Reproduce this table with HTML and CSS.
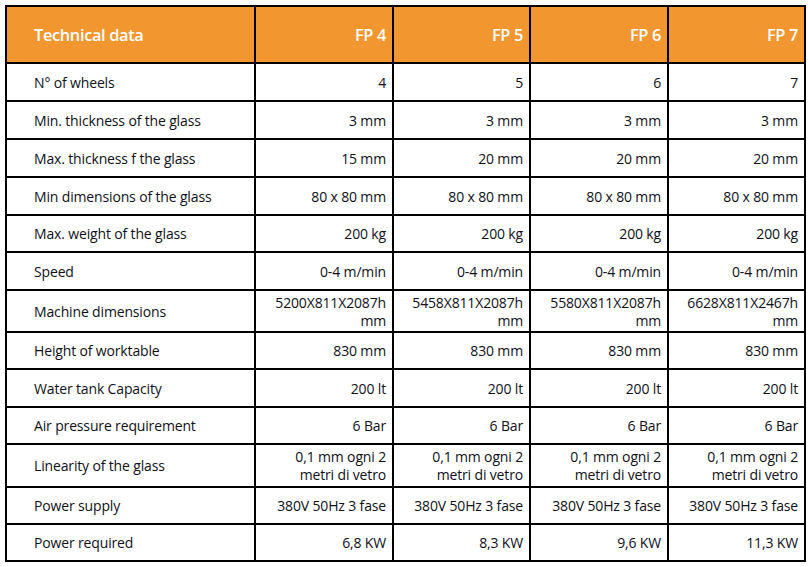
FILE: index.html
```html
<!DOCTYPE html>
<html lang="en">
<head>
<meta charset="utf-8">
<title>Technical data</title>
<link rel="stylesheet" href="styles.css">
</head>
<body>
<table class="spec">
  <thead>
    <tr class="head">
      <th class="label">Technical data</th>
      <th>FP 4</th>
      <th>FP 5</th>
      <th>FP 6</th>
      <th>FP 7</th>
    </tr>
  </thead>
  <tbody>
    <tr><td class="label">N° of wheels</td><td>4</td><td>5</td><td>6</td><td>7</td></tr>
    <tr><td class="label">Min. thickness of the glass</td><td>3 mm</td><td>3 mm</td><td>3 mm</td><td>3 mm</td></tr>
    <tr><td class="label">Max. thickness f the glass</td><td>15 mm</td><td>20 mm</td><td>20 mm</td><td>20 mm</td></tr>
    <tr><td class="label">Min dimensions of the glass</td><td>80 x 80 mm</td><td>80 x 80 mm</td><td>80 x 80 mm</td><td>80 x 80 mm</td></tr>
    <tr class="s"><td class="label">Max. weight of the glass</td><td>200 kg</td><td>200 kg</td><td>200 kg</td><td>200 kg</td></tr>
    <tr><td class="label">Speed</td><td>0-4 m/min</td><td>0-4 m/min</td><td>0-4 m/min</td><td>0-4 m/min</td></tr>
    <tr class="tall"><td class="label">Machine dimensions</td><td>5200X811X2087h<br>mm</td><td>5458X811X2087h<br>mm</td><td>5580X811X2087h<br>mm</td><td>6628X811X2467h<br>mm</td></tr>
    <tr class="s"><td class="label">Height of worktable</td><td>830 mm</td><td>830 mm</td><td>830 mm</td><td>830 mm</td></tr>
    <tr><td class="label">Water tank Capacity</td><td>200 lt</td><td>200 lt</td><td>200 lt</td><td>200 lt</td></tr>
    <tr class="s"><td class="label">Air pressure requirement</td><td>6 Bar</td><td>6 Bar</td><td>6 Bar</td><td>6 Bar</td></tr>
    <tr class="tall2"><td class="label">Linearity of the glass</td><td>0,1 mm ogni 2<br>metri di vetro</td><td>0,1 mm ogni 2<br>metri di vetro</td><td>0,1 mm ogni 2<br>metri di vetro</td><td>0,1 mm ogni 2<br>metri di vetro</td></tr>
    <tr class="s"><td class="label">Power supply</td><td>380V 50Hz 3 fase</td><td>380V 50Hz 3 fase</td><td>380V 50Hz 3 fase</td><td>380V 50Hz 3 fase</td></tr>
    <tr class="s"><td class="label">Power required</td><td>6,8 KW</td><td>8,3 KW</td><td>9,6 KW</td><td>11,3 KW</td></tr>
  </tbody>
</table>
</body>
</html>
```

FILE: styles.css
```css
html, body {
  margin: 0;
  padding: 0;
  background: #ffffff;
}

body {
  padding: 5px 0 0 5px;
  font-family: "Open Sans", "Lato", sans-serif;
  color: #101018;
}

.spec {
  border-collapse: separate;
  border-spacing: 0;
  border-left: 2px solid #000;
  border-top: 2px solid #000;
  table-layout: fixed;
  width: 801px;
}

.spec th,
.spec td {
  border-right: 2px solid #000;
  border-bottom: 2px solid #000;
  padding: 1px 6px 0 6px;
  text-align: right;
  vertical-align: middle;
  font-size: 14px;
  letter-spacing: -0.15px;
  line-height: 18px;
  height: 36px;
  box-sizing: border-box;
  white-space: nowrap;
}

.spec th {
  background: #f2962f;
  color: #ffffff;
  font-weight: 600;
  font-size: 16.4px;
  letter-spacing: -0.35px;
  height: 57px;
}

.spec th:nth-child(1), .spec td:nth-child(1) { width: 249px; }
.spec th:nth-child(2), .spec td:nth-child(2) { width: 138px; }
.spec th:nth-child(3), .spec td:nth-child(3) { width: 137px; }
.spec th:nth-child(4), .spec td:nth-child(4) { width: 138px; }
.spec th:nth-child(5), .spec td:nth-child(5) { width: 137px; }

.spec .label {
  text-align: left;
  padding-left: 27px;
}

.spec tr td { height: 38px; }
.spec tr.s td { height: 37px; }
.spec tr.tall td { height: 42px; }
.spec tr.tall2 td { height: 43px; }
```
